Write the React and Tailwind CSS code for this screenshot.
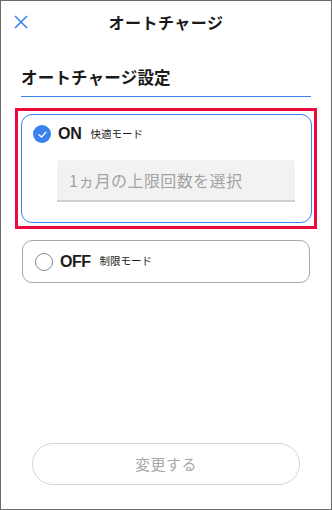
import React from 'react';

const font = { fontFamily: '"Noto Sans CJK JP", "Noto Sans", sans-serif' };
const latin = { fontFamily: '"Liberation Sans", "Noto Sans CJK JP", sans-serif' };

export default function App() {
  return (
    <div
      className="w-[332px] h-[510px] bg-white border border-[#6b6b6b] flex flex-col text-[#1a1a1a] overflow-hidden"
      style={font}
    >
      {/* Header */}
      <div className="relative h-[42px] flex items-center justify-center">
        <button className="absolute left-[13px] top-[14px] w-[14px] h-[14px]">
          <svg viewBox="0 0 14 14" width="14" height="14">
            <path d="M1 1L13 13M13 1L1 13" stroke="#3a82f0" strokeWidth="1.6" fill="none" />
          </svg>
        </button>
        <h1 className="text-[16px] font-semibold tracking-[0.5px] leading-none">オートチャージ</h1>
      </div>

      {/* Section title */}
      <div className="mx-[20px] mt-[22px] pb-[7px] border-b-[1.5px] border-[#3a82f0]">
        <h2 className="text-[16.5px] font-bold leading-[24px] tracking-[0.2px]">オートチャージ設定</h2>
      </div>

      {/* ON option */}
      <div className="mx-[14px] mt-[11px] border-[3px] border-[#ec0a3c] p-[3px] pr-[2px]">
        <div className="border-[1.5px] border-[#3a82f0] rounded-[11px] pt-[10px] pb-[20px]">
          <div className="flex items-center pl-[11px]">
            <span className="w-[18px] h-[18px] rounded-full bg-[#3a82f0] flex items-center justify-center">
              <svg viewBox="0 0 12 12" width="11" height="11">
                <path d="M2.2 6.3L4.9 8.8L9.8 3.4" stroke="#fff" strokeWidth="1.5" fill="none" strokeLinecap="round" strokeLinejoin="round" />
              </svg>
            </span>
            <span className="ml-[7px] text-[16px] font-bold leading-none tracking-[-0.3px]" style={latin}>ON</span>
            <span className="ml-[9px] text-[10.5px] leading-none">快適モード</span>
          </div>
          <div className="ml-[35px] mr-[16px] mt-[17px] h-[42px] bg-[#f2f2f2] rounded-t-[3px] border-b-2 border-[#cfcfcf] flex items-center pl-[12px]">
            <span className="text-[16px] text-[#a3a3a3] tracking-[0.4px]">1ヵ月の上限回数を選択</span>
          </div>
        </div>
      </div>

      {/* OFF option */}
      <div className="mx-[21px] mt-[11px] h-[43px] border border-[#a8a8a8] rounded-[10px] flex items-center pl-[12px]">
        <span className="w-[18px] h-[18px] rounded-full border-[1.5px] border-[#8c8c8c]" />
        <span className="ml-[7px] text-[16px] font-bold leading-none tracking-[-0.5px]" style={latin}>OFF</span>
        <span className="ml-[9px] text-[10.5px] leading-none">制限モード</span>
      </div>

      {/* Submit */}
      <div className="mt-auto mb-[24px] mx-[31px]">
        <button className="w-full h-[42px] rounded-full border border-[#d6d6d6] text-[15px] text-[#a8a8a8] tracking-[0.5px]">
          変更する
        </button>
      </div>
    </div>
  );
}
